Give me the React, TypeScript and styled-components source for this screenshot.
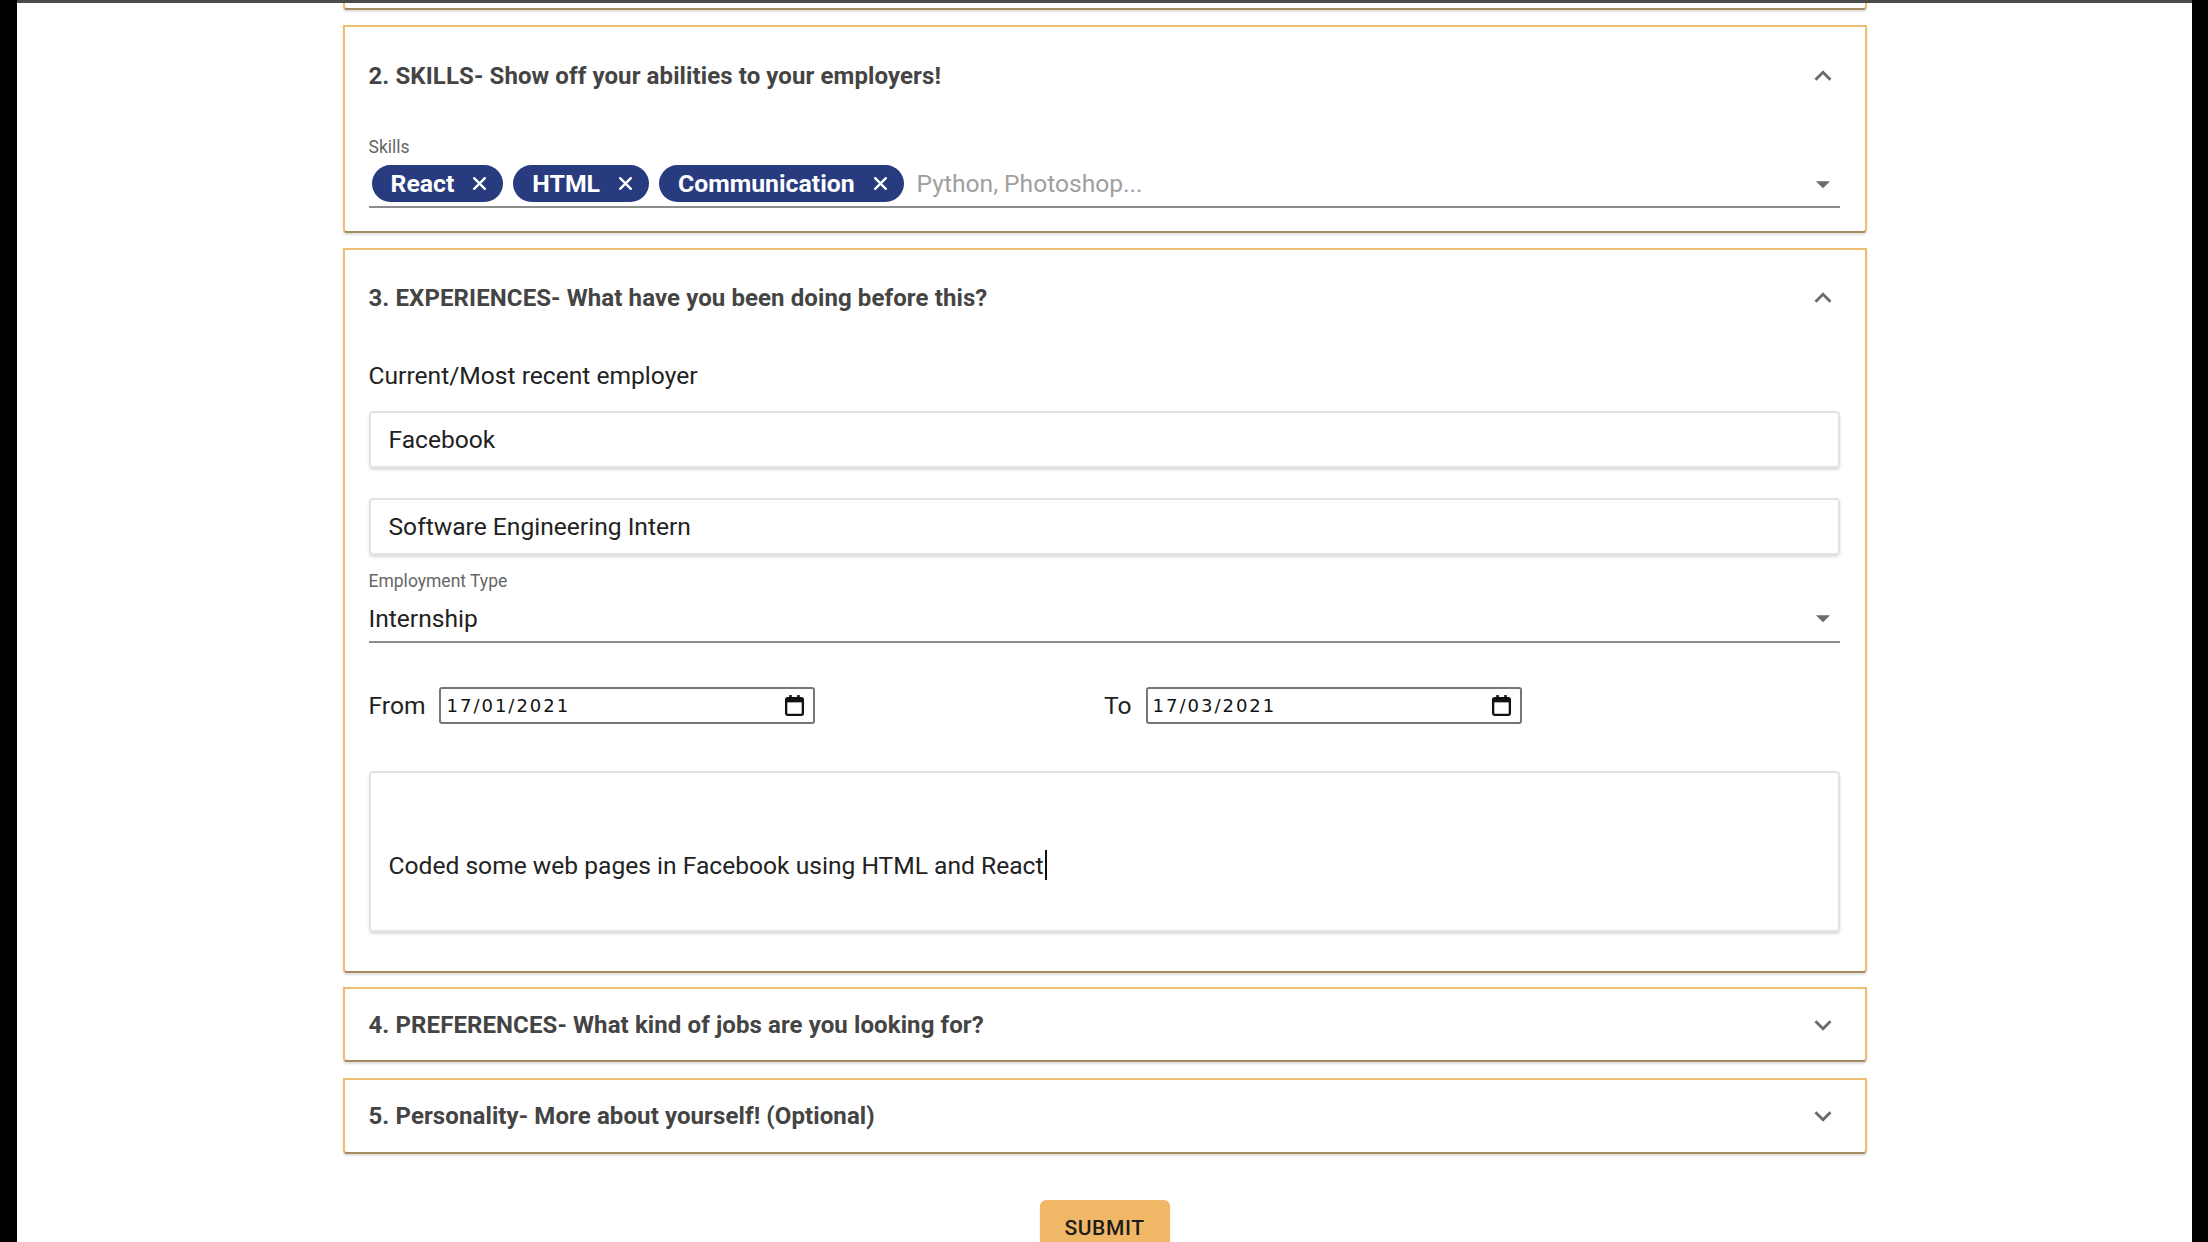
import React from 'react';
import styled, { createGlobalStyle } from 'styled-components';

const GlobalStyle = createGlobalStyle`
    html, body {
        margin: 0;
        padding: 0;
        background: #000;
    }
    body {
        font-family: Roboto, "Noto Sans", Arial, sans-serif;
    }
`;

const Frame = styled.div`
    margin: 0 16px 0 17px;
    height: 1242px;
    box-sizing: border-box;
    background: #fff;
    border-top: 3px solid #4b4b4b;
    overflow: hidden;
`;

const Column = styled.div`
    width: 1524px;
    margin: 0 auto;
    display: flex;
    flex-direction: column;
`;

const cardBorder = `
    box-sizing: border-box;
    background: #fff;
    border: 2px solid #efbd6f;
    border-bottom-color: #a68a60;
    border-radius: 0 0 4px 4px;
    box-shadow: 0 2px 2px rgba(0, 0, 0, 0.12);
`;

const CardStub = styled.div`
    ${cardBorder};
    border-top: none;
    height: 7px;
`;

const Card = styled.section<{ $gap: number }>`
    ${cardBorder};
    margin-top: ${p => p.$gap}px;
`;

const Summary = styled.div<{ $height: number }>`
    height: ${p => p.$height}px;
    display: flex;
    align-items: center;
    justify-content: space-between;
    padding: 0 25px 0 24px;
`;

const Heading = styled.h2`
    margin: 0;
    font-size: 24px;
    font-weight: 700;
    color: #444;
    letter-spacing: 0.1px;
`;

const Details = styled.div<{ $bottom: number }>`
    padding: 0 25px ${p => p.$bottom}px 24px;
`;

const SmallLabel = styled.div<{ $top: number }>`
    margin-top: ${p => p.$top}px;
    font-size: 17.5px;
    line-height: 20px;
    color: #666;
`;

const TagField = styled.div`
    margin-top: 8px;
    display: flex;
    align-items: center;
    gap: 10px;
    padding: 0 0 4px 3px;
    border-bottom: 2px solid #8c8c8c;
`;

const Chip = styled.span`
    display: inline-flex;
    align-items: center;
    gap: 18px;
    height: 37px;
    padding: 0 16px 0 19px;
    border-radius: 19px;
    background: #283b7e;
    color: #fff;
    font-size: 24.8px;
    font-weight: 700;
`;

const Placeholder = styled.span`
    flex: 1;
    margin-left: 3px;
    font-size: 24.6px;
    color: #a0a0a0;
`;

const FieldLabel = styled.div`
    margin-top: 16px;
    font-size: 24.6px;
    line-height: 28px;
    color: #222;
`;

const TextBox = styled.div<{ $top: number }>`
    margin-top: ${p => p.$top}px;
    height: 57px;
    box-sizing: border-box;
    display: flex;
    align-items: center;
    padding: 0 18px;
    border: 2px solid #e3e3e3;
    border-radius: 4px;
    box-shadow: 0 2px 3px rgba(0, 0, 0, 0.14);
    font-size: 24.6px;
    color: #222;
`;

const SelectRow = styled.div`
    margin-top: 12px;
    display: flex;
    align-items: center;
    justify-content: space-between;
    height: 30px;
    padding-bottom: 8px;
    border-bottom: 2px solid #8c8c8c;
    font-size: 24.6px;
    color: #222;
`;

const DateRow = styled.div`
    margin-top: 44px;
    display: grid;
    grid-template-columns: 1fr 1fr;
`;

const DateGroup = styled.label`
    display: flex;
    align-items: center;
    gap: 14px;
    font-size: 24.6px;
    color: #222;
`;

const DateField = styled.div`
    width: 376px;
    height: 37px;
    box-sizing: border-box;
    display: flex;
    align-items: center;
    justify-content: space-between;
    padding: 0 8px 0 5px;
    border: 2px solid #767676;
    border-radius: 3px;
    font-family: "DejaVu Sans", sans-serif;
    font-size: 18px;
    letter-spacing: 2px;
    color: #111;
`;

const NoteBox = styled.div`
    margin-top: 47px;
    height: 161px;
    box-sizing: border-box;
    padding: 77px 18px 0;
    border: 2px solid #e3e3e3;
    border-radius: 4px;
    box-shadow: 0 2px 3px rgba(0, 0, 0, 0.14);
    font-size: 24.6px;
    line-height: 32px;
    color: #222;
`;

const Caret = styled.span`
    display: inline-block;
    width: 2px;
    height: 30px;
    margin-left: 1px;
    vertical-align: -6px;
    background: #111;
`;

const SubmitButton = styled.button`
    align-self: center;
    margin-top: 46px;
    width: 130px;
    height: 56px;
    border: none;
    border-radius: 6px;
    background: #f0b866;
    box-shadow: 0 3px 1px -2px rgba(0, 0, 0, 0.2), 0 2px 2px rgba(0, 0, 0, 0.14);
    font-family: Roboto, sans-serif;
    font-size: 21px;
    font-weight: 500;
    letter-spacing: 0.6px;
    color: #1c1c1c;
`;

const Icon = styled.svg<{ $size: number }>`
    width: ${p => p.$size}px;
    height: ${p => p.$size}px;
    flex: none;
    fill: rgba(0, 0, 0, 0.58);
`;

const Chevron = ({ up }: { up?: boolean }) => (
    <Icon $size={34} viewBox="0 0 24 24">
        {up
            ? <path d="M12 8l-6 6 1.41 1.41L12 10.83l4.59 4.58L18 14z"/>
            : <path d="M16.59 8.59L12 13.17 7.41 8.59 6 10l6 6 6-6z"/>}
    </Icon>
);

const DropArrow = () => (
    <Icon $size={34} viewBox="0 0 24 24">
        <path d="M7 10l5 5 5-5z"/>
    </Icon>
);

const CloseMark = () => (
    <svg width="15" height="15" viewBox="0 0 14 14">
        <path d="M2 2 L12 12 M12 2 L2 12" stroke="#fff" strokeWidth="2.2" strokeLinecap="round"/>
    </svg>
);

const CalendarIcon = () => (
    <svg width="21" height="23" viewBox="0 0 20 22">
        <rect x="2" y="4" width="16" height="16" rx="1.5" fill="none" stroke="#111" strokeWidth="2.2"/>
        <rect x="2" y="4" width="16" height="4" fill="#111"/>
        <rect x="5" y="1" width="2.4" height="4" fill="#111"/>
        <rect x="12.6" y="1" width="2.4" height="4" fill="#111"/>
    </svg>
);

const skills = ['React', 'HTML', 'Communication'];

export default function App() {
    return (
        <Frame>
            <GlobalStyle/>
            <Column>
                <CardStub/>

                <Card $gap={15}>
                    <Summary $height={98}>
                        <Heading>2. SKILLS- Show off your abilities to your employers!</Heading>
                        <Chevron up/>
                    </Summary>
                    <Details $bottom={23}>
                        <SmallLabel $top={12}>Skills</SmallLabel>
                        <TagField>
                            {skills.map(s => (
                                <Chip key={s}>{s}<CloseMark/></Chip>
                            ))}
                            <Placeholder>Python, Photoshop...</Placeholder>
                            <DropArrow/>
                        </TagField>
                    </Details>
                </Card>

                <Card $gap={15}>
                    <Summary $height={96}>
                        <Heading>3. EXPERIENCES- What have you been doing before this?</Heading>
                        <Chevron up/>
                    </Summary>
                    <Details $bottom={39}>
                        <FieldLabel>Current/Most recent employer</FieldLabel>
                        <TextBox $top={21}>Facebook</TextBox>
                        <TextBox $top={30}>Software Engineering Intern</TextBox>
                        <SmallLabel $top={16}>Employment Type</SmallLabel>
                        <SelectRow>
                            <span>Internship</span>
                            <DropArrow/>
                        </SelectRow>
                        <DateRow>
                            <DateGroup>
                                From
                                <DateField><span>17/01/2021</span><CalendarIcon/></DateField>
                            </DateGroup>
                            <DateGroup>
                                To
                                <DateField><span>17/03/2021</span><CalendarIcon/></DateField>
                            </DateGroup>
                        </DateRow>
                        <NoteBox>
                            Coded some web pages in Facebook using HTML and React<Caret/>
                        </NoteBox>
                    </Details>
                </Card>

                <Card $gap={14}>
                    <Summary $height={71}>
                        <Heading>4. PREFERENCES- What kind of jobs are you looking for?</Heading>
                        <Chevron/>
                    </Summary>
                </Card>

                <Card $gap={16}>
                    <Summary $height={72}>
                        <Heading>5. Personality- More about yourself! (Optional)</Heading>
                        <Chevron/>
                    </Summary>
                </Card>

                <SubmitButton>SUBMIT</SubmitButton>
            </Column>
        </Frame>
    );
}
